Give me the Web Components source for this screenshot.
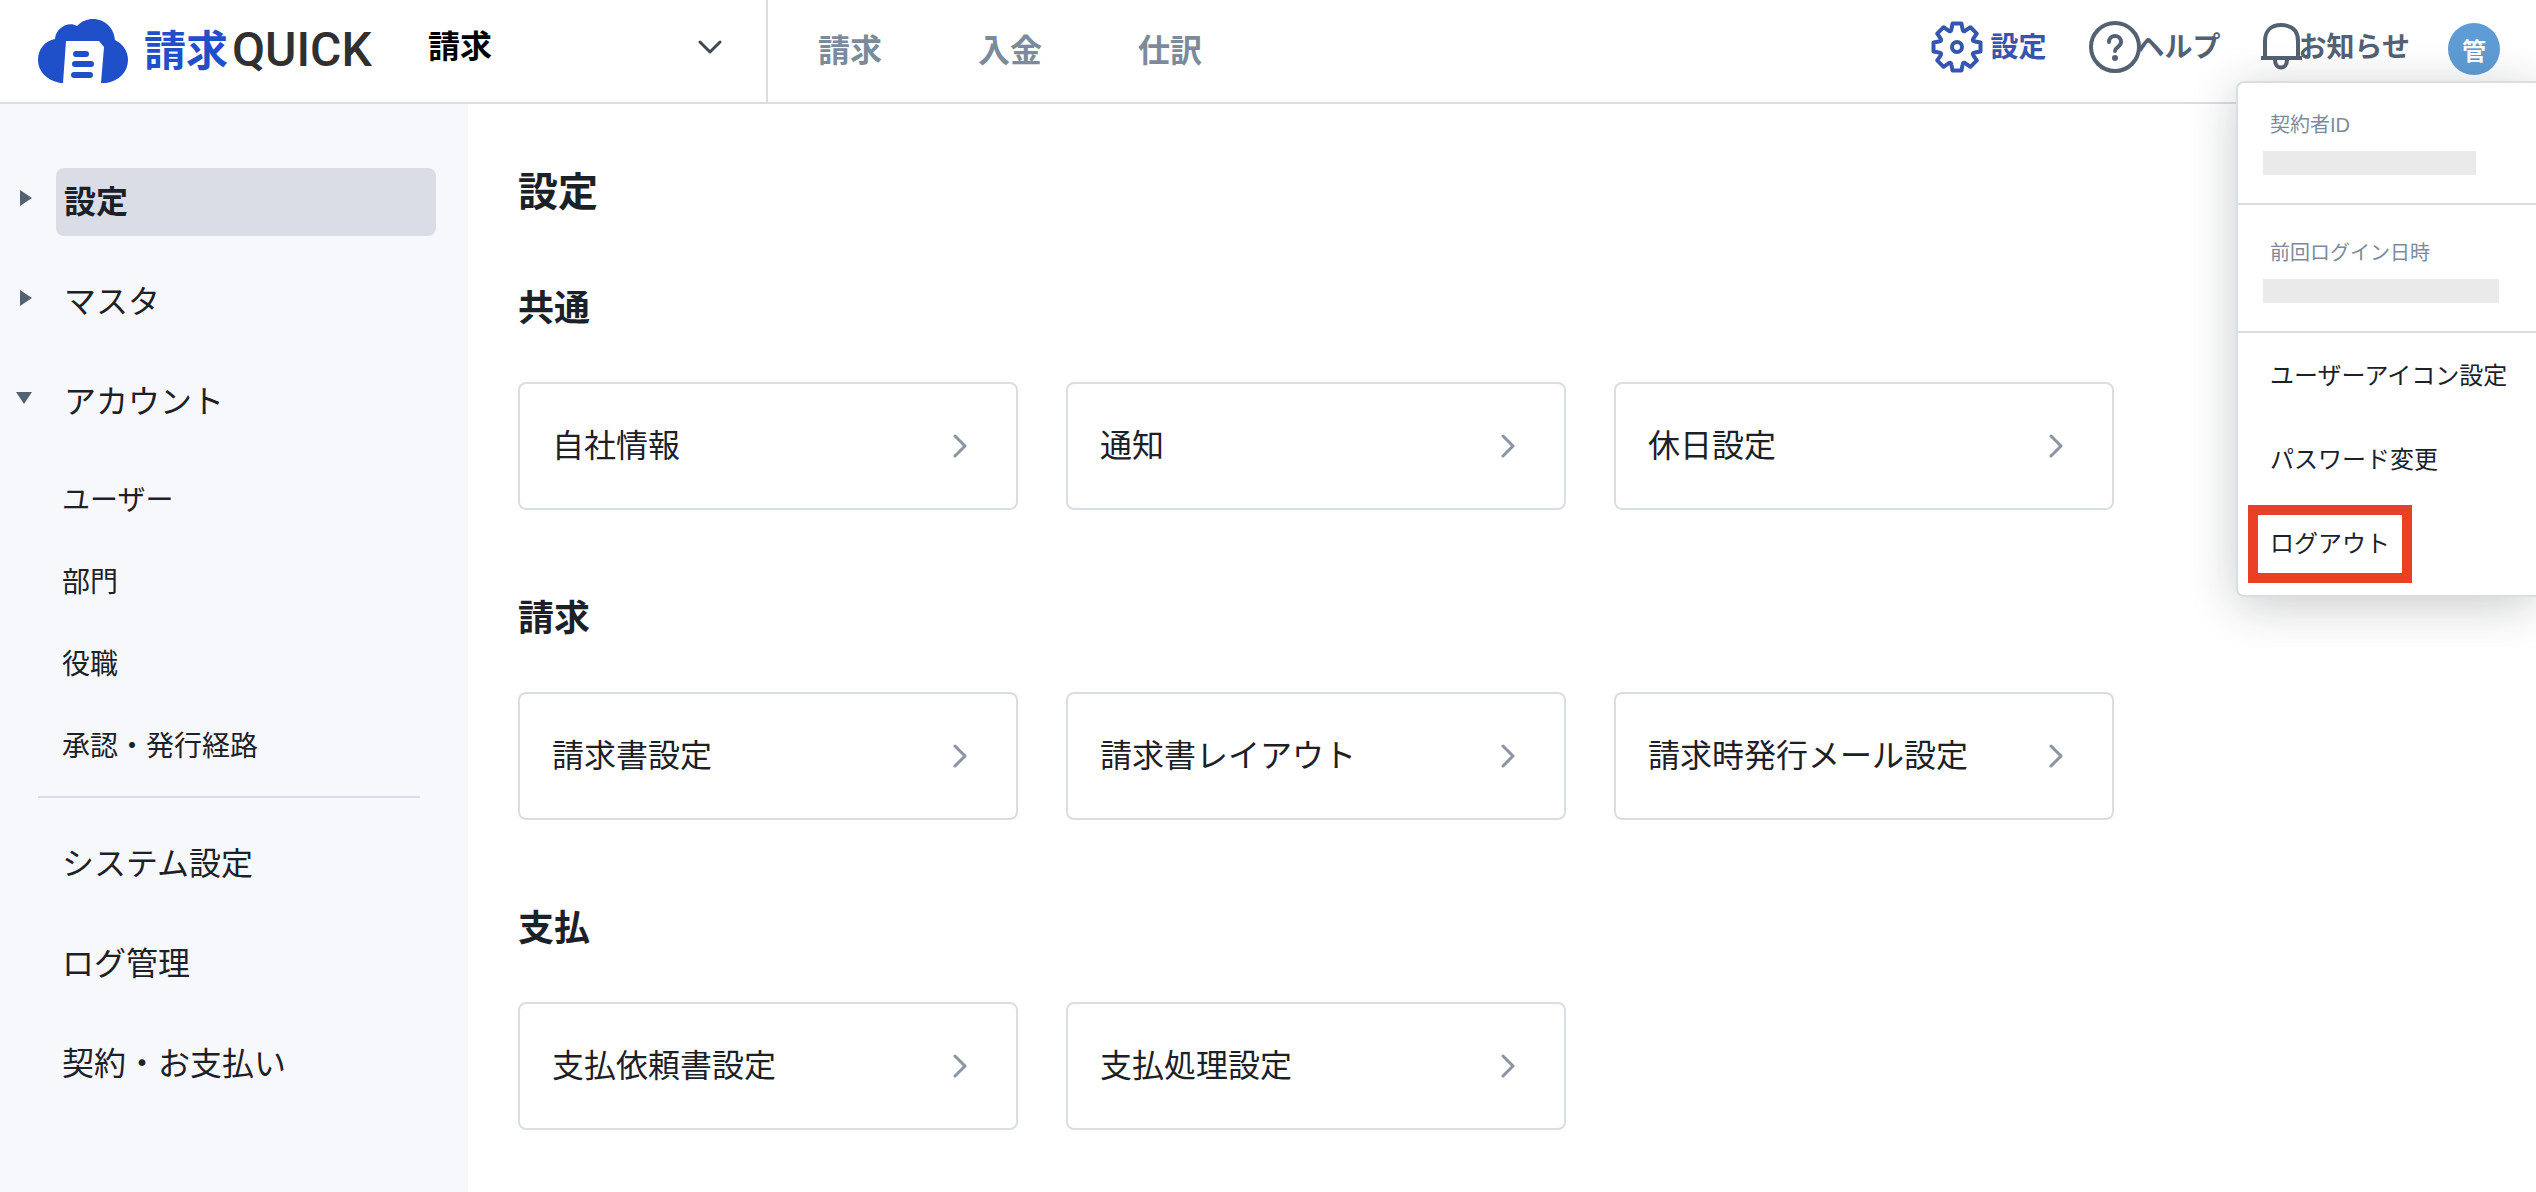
<!DOCTYPE html>
<html lang="ja">
<head>
<meta charset="UTF-8">
<meta name="viewport" content="width=device-width, initial-scale=1">
<title>設定 | 請求QUICK</title>
<style>
  body {
    margin: 0;
    font-family: "Liberation Sans", "Noto Sans CJK JP", sans-serif;
    color: #1c2127;
    background: #fff;
  }
</style>
</head>
<body>
<settings-page></settings-page>

<script>
class AppLogo extends HTMLElement {
  constructor() {
    super();
    this.attachShadow({ mode: "open" });
  }

  connectedCallback() {
    this.shadowRoot.innerHTML = `
      <style>
        :host {
          display: block;
        }

        a {
          display: flex;
          align-items: center;
          gap: 16px;
          color: #303030;
          text-decoration: none;
          white-space: nowrap;
        }

        svg {
          display: block;
        }

        .name {
          display: flex;
          align-items: baseline;
          gap: 4px;
          line-height: 64px;
        }

        .ja {
          font-size: 42px;
          font-weight: bold;
          color: #1f50c9;
        }

        .en {
          font-family: Roboto, sans-serif;
          font-size: 48px;
          font-weight: 500;
        }
      </style>

      <a href="#">
        <svg width="90" height="64" viewBox="0 0 90 64" aria-hidden="true">
          <path fill="#1f50c9" d="M22 64C8 61 0 52 0 41C0 30 7 22 17 20C18 9 30 2 39 7C44 2 49 0 55 0C67 0 76 9 77 21C85 25 90 32 90 41C90 53 81 62 68 64H63L66 28L61 22H28L25 64Z"/>
          <path stroke="#1f50c9" stroke-width="6" stroke-linecap="round" d="M38 35H48M37 45H53M36 56H52"/>
        </svg>
        <span class="name"><span class="ja">請求</span><span class="en">QUICK</span></span>
      </a>
    `;
  }
}

class ProductSelect extends HTMLElement {
  constructor() {
    super();
    this.attachShadow({ mode: "open" });
  }

  connectedCallback() {
    this.shadowRoot.innerHTML = `
      <style>
        :host {
          display: grid;
          align-items: center;
          width: 348px;
          box-sizing: border-box;
          border-right: 2px solid #d9dde4;
        }

        select, svg {
          grid-area: 1 / 1;
        }

        select {
          appearance: none;
          height: 94px;
          align-self: start;
          padding: 0 80px 0 8px;
          border: 0;
          background: none;
          font: bold 32px "Liberation Sans", "Noto Sans CJK JP", sans-serif;
          color: #000;
        }

        svg {
          justify-self: end;
          margin: 0 44px 8px 0;
          pointer-events: none;
        }
      </style>

      <select aria-label="サービス">
        <option>請求</option>
      </select>
      <svg width="24" height="14" viewBox="0 0 24 14" fill="none" stroke="#3f4852" stroke-width="3" stroke-linecap="round" stroke-linejoin="round" aria-hidden="true">
        <path d="M2 2L12 12L22 2"/>
      </svg>
    `;
  }
}

class HeaderLink extends HTMLElement {
  constructor() {
    super();
    this.attachShadow({ mode: "open" });
  }

  connectedCallback() {
    this.shadowRoot.innerHTML = `
      <style>
        :host {
          display: block;
          color: #536172;
        }

        :host([active]) {
          color: #3555ae;
        }

        a {
          display: flex;
          align-items: flex-start;
          color: inherit;
          text-decoration: none;
          font-size: 28px;
          font-weight: bold;
          line-height: 56px;
          white-space: nowrap;
        }

        ::slotted(svg) {
          display: block;
          flex: none;
        }
      </style>

      <a href="#"><slot name="icon"></slot><slot></slot></a>
    `;
  }
}

class UserMenu extends HTMLElement {
  constructor() {
    super();
    this.attachShadow({ mode: "open" });
  }

  connectedCallback() {
    this.shadowRoot.innerHTML = `
      <style>
        :host {
          display: block;
          box-sizing: border-box;
          width: 300px;
          border: 2px solid #d9dde4;
          border-right: 0;
          border-radius: 8px 0 0 8px;
          background: #fff;
          box-shadow: 0 8px 48px rgba(28, 33, 39, 0.24);
          white-space: nowrap;
        }

        dl {
          margin: 0;
        }

        .info {
          box-sizing: border-box;
          height: 128px;
          padding: 24px 0 0 25px;
          border-bottom: 2px solid #d9dde4;
        }

        .first {
          height: 122px;
        }

        .first .mask {
          width: 213px;
        }

        dt {
          padding-left: 7px;
          font-size: 20px;
          line-height: 36px;
          color: #7c8b9b;
        }

        .login {
          padding-top: 30px;
        }

        dd {
          margin: 8px 0 0;
        }

        .mask {
          width: 236px;
          height: 24px;
          background: #eaeaea;
        }

        nav {
          display: flex;
          flex-direction: column;
          align-items: flex-start;
          gap: 6px;
          padding: 4px 0 12px 10px;
        }

        a {
          border: 10px solid transparent;
          padding: 0 12px;
          color: inherit;
          text-decoration: none;
          font-size: 24px;
          line-height: 58px;
        }

        .marked {
          border-color: #ea4025;
        }
      </style>

      <dl>
        <div class="info first"><dt>契約者ID</dt><dd class="mask"></dd></div>
        <div class="info login"><dt>前回ログイン日時</dt><dd class="mask"></dd></div>
      </dl>
      <nav>
        <a href="#">ユーザーアイコン設定</a>
        <a href="#">パスワード変更</a>
        <a href="#" class="marked">ログアウト</a>
      </nav>
    `;
  }
}

class AppHeader extends HTMLElement {
  constructor() {
    super();
    this.attachShadow({ mode: "open" });
  }

  connectedCallback() {
    this.shadowRoot.innerHTML = `
      <style>
        :host {
          display: block;
          position: relative;
        }

        header {
          display: flex;
          height: 102px;
          border-bottom: 2px solid #d9dde4;
        }

        app-logo {
          width: 382px;
          padding: 18px 0 0 38px;
        }

        .tabs {
          display: flex;
          gap: 96px;
          padding-left: 50px;
        }

        .tabs a {
          color: #7c8b9b;
          text-decoration: none;
          font-size: 32px;
          font-weight: bold;
          line-height: 102px;
        }

        .tools {
          display: flex;
          align-items: flex-start;
          margin-left: auto;
          padding: 20px 36px 0 0;
        }

        .settings {
          margin-right: 42px;
        }

        .settings svg {
          margin-right: 8px;
        }

        .help {
          margin-right: 40px;
        }

        .help svg {
          margin-right: -4px;
        }

        .news {
          margin-right: 38px;
        }

        .news svg {
          margin-right: -4px;
        }

        .avatar {
          width: 52px;
          height: 52px;
          margin: 3px 0 0;
          padding: 0;
          border: 0;
          border-radius: 50%;
          background: #5f9cd5;
          color: #fff;
          font: bold 24px "Liberation Sans", "Noto Sans CJK JP", sans-serif;
        }

        /* open menu hangs below the avatar, over the page */
        user-menu {
          position: absolute;
          top: 81px;
          right: 0;
        }
      </style>

      <header>
        <app-logo></app-logo>
        <product-select></product-select>
        <nav class="tabs">
          <a href="#">請求</a>
          <a href="#">入金</a>
          <a href="#">仕訳</a>
        </nav>
        <div class="tools">
          <header-link class="settings" active>
            <svg slot="icon" width="52" height="54" viewBox="-26 -27 52 54" fill="none" stroke="currentColor" stroke-width="4" stroke-linejoin="round" aria-hidden="true">
              <path d="M-5.5 -18L-4.5 -23.5H4.5L5.5 -18Q6 -14.5 8.8 -16.6L13.4 -19.8L19.8 -13.4L16.6 -8.8Q14.5 -6 18 -5.5L23.5 -4.5V4.5L18 5.5Q14.5 6 16.6 8.8L19.8 13.4L13.4 19.8L8.8 16.6Q6 14.5 5.5 18L4.5 23.5H-4.5L-5.5 18Q-6 14.5 -8.8 16.6L-13.4 19.8L-19.8 13.4L-16.6 8.8Q-14.5 6 -18 5.5L-23.5 4.5V-4.5L-18 -5.5Q-14.5 -6 -16.6 -8.8L-19.8 -13.4L-13.4 -19.8L-8.8 -16.6Q-6 -14.5 -5.5 -18Z"/>
              <circle cx="0" cy="0" r="5"/>
            </svg>
            設定
          </header-link>
          <header-link class="help">
            <svg slot="icon" width="52" height="54" viewBox="0 0 52 54" fill="none" stroke="currentColor" stroke-width="4" aria-hidden="true">
              <circle cx="26" cy="27" r="24"/>
              <path stroke-linecap="round" d="M20 22C20 14 32 14 32 22C32 27 26 27 26 31"/>
              <circle cx="26" cy="38" r="3" fill="currentColor" stroke="none"/>
            </svg>
            ヘルプ
          </header-link>
          <header-link class="news">
            <svg slot="icon" width="42" height="54" viewBox="0 0 42 54" fill="none" stroke="currentColor" stroke-width="4" aria-hidden="true">
              <path d="M4 38V21C4 10 11 5 20 5C30 5 37 10 37 21V38M0 38H41M14 40C14 50 26 50 26 40"/>
            </svg>
            お知らせ
          </header-link>
          <button class="avatar" type="button">管</button>
        </div>
      </header>
      <user-menu></user-menu>
    `;
  }
}

class SideItem extends HTMLElement {
  constructor() {
    super();
    this.attachShadow({ mode: "open" });
  }

  connectedCallback() {
    // arrow="right" is a closed group, arrow="down" an open one
    const arrows = {
      right: `<svg width="12" height="16" viewBox="0 0 12 16"><path d="M0 0L12 8L0 16Z"/></svg>`,
      down: `<svg width="16" height="12" viewBox="0 0 16 12"><path d="M0 0H16L8 12Z"/></svg>`
    };
    const arrow = arrows[this.getAttribute("arrow")] || "";

    this.shadowRoot.innerHTML = `
      <style>
        :host {
          display: grid;
          grid-template-columns: 32px 1fr;
          column-gap: 24px;
          align-items: center;
        }

        .arrow {
          display: flex;
          justify-content: flex-end;
          padding-bottom: 8px;
        }

        svg {
          display: block;
          fill: #536172;
        }

        a {
          padding-left: 8px;
          border-radius: 8px;
          color: inherit;
          text-decoration: none;
          font-size: 32px;
          line-height: 68px;
        }

        :host([active]) a {
          background: #dadde5;
          font-weight: bold;
        }

        :host([sub]) a {
          padding-left: 6px;
          font-size: 28px;
          line-height: 82px;
        }

        :host([plain]) a {
          padding-left: 6px;
        }
      </style>

      <span class="arrow">${arrow}</span>
      <a href="#"><slot></slot></a>
    `;
  }
}

class SideNav extends HTMLElement {
  constructor() {
    super();
    this.attachShadow({ mode: "open" });
  }

  connectedCallback() {
    this.shadowRoot.innerHTML = `
      <style>
        :host {
          display: block;
          box-sizing: border-box;
          padding: 64px 32px 32px 0;
          background: #f7f8fc;
        }

        .group {
          display: flex;
          flex-direction: column;
          gap: 32px;
        }

        .sub {
          margin-top: 24px;
        }

        hr {
          height: 2px;
          margin: 8px 16px 32px 38px;
          border: 0;
          background: #d9dde4;
        }
      </style>

      <nav>
        <div class="group">
          <side-item arrow="right" active>設定</side-item>
          <side-item arrow="right">マスタ</side-item>
          <side-item arrow="down">アカウント</side-item>
        </div>
        <div class="sub">
          <side-item sub>ユーザー</side-item>
          <side-item sub>部門</side-item>
          <side-item sub>役職</side-item>
          <side-item sub>承認・発行経路</side-item>
        </div>
        <hr>
        <div class="group">
          <side-item plain>システム設定</side-item>
          <side-item plain>ログ管理</side-item>
          <side-item plain>契約・お支払い</side-item>
        </div>
      </nav>
    `;
  }
}

class SettingCard extends HTMLElement {
  constructor() {
    super();
    this.attachShadow({ mode: "open" });
  }

  connectedCallback() {
    this.shadowRoot.innerHTML = `
      <style>
        :host {
          display: block;
        }

        a {
          display: flex;
          align-items: center;
          justify-content: space-between;
          padding: 0 48px 0 32px;
          border: 2px solid #d9dde4;
          border-radius: 8px;
          color: inherit;
          text-decoration: none;
          font-size: 32px;
          line-height: 124px;
        }
      </style>

      <a href="#">
        <slot></slot>
        <svg width="16" height="24" viewBox="0 0 16 24" fill="none" stroke="#8a95a1" stroke-width="3" stroke-linecap="round" stroke-linejoin="round" aria-hidden="true">
          <path d="M3 2L13 12L3 22"/>
        </svg>
      </a>
    `;
  }
}

class SettingSection extends HTMLElement {
  constructor() {
    super();
    this.attachShadow({ mode: "open" });
  }

  connectedCallback() {
    this.shadowRoot.innerHTML = `
      <style>
        :host {
          display: block;
        }

        h2 {
          margin: 0 0 46px;
          font-size: 36px;
          line-height: 54px;
        }

        .cards {
          display: grid;
          grid-template-columns: repeat(3, 1fr);
          gap: 48px;
        }
      </style>

      <section>
        <h2>${this.getAttribute("heading")}</h2>
        <div class="cards"><slot></slot></div>
      </section>
    `;
  }
}

class SettingsPage extends HTMLElement {
  constructor() {
    super();
    this.attachShadow({ mode: "open" });
  }

  connectedCallback() {
    this.shadowRoot.innerHTML = `
      <style>
        :host {
          display: flex;
          flex-direction: column;
          min-height: 100vh;
        }

        /* keeps the menu above the main column */
        app-header {
          z-index: 1;
        }

        .body {
          display: grid;
          grid-template-columns: 468px 1fr;
          flex: 1;
        }

        main {
          max-width: 1596px;
          padding: 58px 50px 48px;
        }

        h1 {
          margin: 0 0 60px;
          font-size: 40px;
          line-height: 60px;
        }

        .sections {
          display: flex;
          flex-direction: column;
          gap: 82px;
        }
      </style>

      <app-header></app-header>
      <div class="body">
        <side-nav></side-nav>
        <main>
          <h1>設定</h1>
          <div class="sections">
            <setting-section heading="共通">
              <setting-card>自社情報</setting-card>
              <setting-card>通知</setting-card>
              <setting-card>休日設定</setting-card>
            </setting-section>
            <setting-section heading="請求">
              <setting-card>請求書設定</setting-card>
              <setting-card>請求書レイアウト</setting-card>
              <setting-card>請求時発行メール設定</setting-card>
            </setting-section>
            <setting-section heading="支払">
              <setting-card>支払依頼書設定</setting-card>
              <setting-card>支払処理設定</setting-card>
            </setting-section>
          </div>
        </main>
      </div>
    `;
  }
}

customElements.define("app-logo", AppLogo);
customElements.define("product-select", ProductSelect);
customElements.define("header-link", HeaderLink);
customElements.define("user-menu", UserMenu);
customElements.define("app-header", AppHeader);
customElements.define("side-item", SideItem);
customElements.define("side-nav", SideNav);
customElements.define("setting-card", SettingCard);
customElements.define("setting-section", SettingSection);
customElements.define("settings-page", SettingsPage);
</script>
</body>
</html>
